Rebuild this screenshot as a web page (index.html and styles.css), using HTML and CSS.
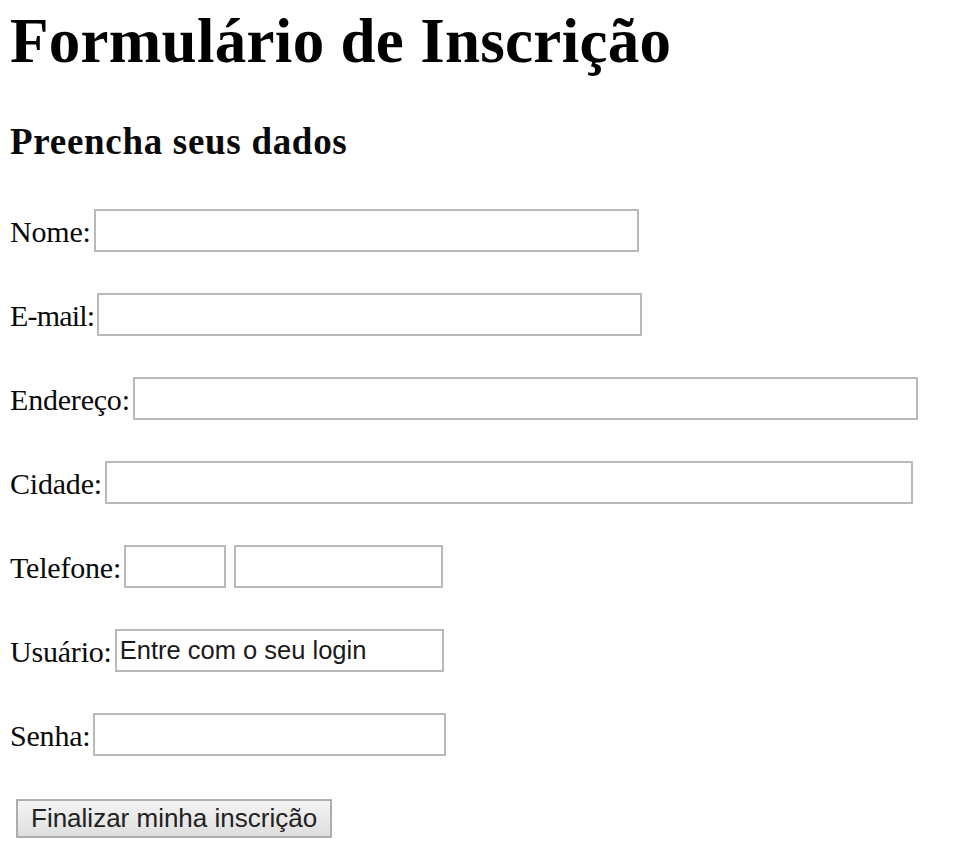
FILE: index.html
```html
<!DOCTYPE html>
<html lang="pt-BR">
<head>
<meta charset="utf-8">
<title>Formulário de Inscrição</title>
<link rel="stylesheet" href="styles.css">
</head>
<body>
<main class="page">
  <h1 class="title">Formulário de Inscrição</h1>
  <h3 class="subtitle">Preencha seus dados</h3>
  <form class="form">
    <div class="row"><label class="lbl" for="nome">Nome:</label><input class="field w-nome" id="nome" type="text"></div>
    <div class="row"><label class="lbl tight" for="email">E-mail:</label><input class="field w-email" id="email" type="text"></div>
    <div class="row"><label class="lbl" for="end">Endereço:</label><input class="field w-end" id="end" type="text"></div>
    <div class="row"><label class="lbl" for="cid">Cidade:</label><input class="field w-cid" id="cid" type="text"></div>
    <div class="row"><label class="lbl" for="ddd">Telefone:</label><input class="field w-ddd" id="ddd" type="text"><input class="field w-tel" type="text"></div>
    <div class="row"><label class="lbl" for="usr">Usuário:</label><input class="field w-usr" id="usr" type="text" value="Entre com o seu login"></div>
    <div class="row"><label class="lbl" for="pwd">Senha:</label><input class="field w-pwd" id="pwd" type="password"></div>
    <div class="actions"><button class="btn" type="submit">Finalizar minha inscrição</button></div>
  </form>
</main>
</body>
</html>
```

FILE: styles.css
```css
html, body {
  margin: 0;
  padding: 0;
  background: #ffffff;
}

.page {
  padding: 0 0 0 10px;
  font-family: "Liberation Serif", "Times New Roman", serif;
  color: #000;
}

.title {
  margin: 10px 0 0 0;
  font-size: 63px;
  line-height: 1;
  font-weight: bold;
  letter-spacing: 0.3px;
  white-space: nowrap;
}

.subtitle {
  margin: 50px 0 0 0;
  font-size: 37px;
  line-height: 1;
  font-weight: bold;
  letter-spacing: 0.7px;
  color: #0a0a0a;
}

.form {
  display: flex;
  flex-direction: column;
  gap: 41px;
  margin-top: 49px;
}

.row {
  display: flex;
  align-items: center;
  height: 43px;
}

.lbl {
  font-size: 30px;
  padding-top: 3px;
  color: #0a0a0a;
  letter-spacing: -0.2px;
  white-space: nowrap;
}

.lbl.tight {
  letter-spacing: -0.8px;
}

.field {
  box-sizing: border-box;
  height: 43px;
  margin: 0 0 0 3px;
  border: 2px solid #b9b9b9;
  padding: 0 3px;
  font-family: "Liberation Sans", Arial, sans-serif;
  font-size: 25.5px;
  color: #1a1a1a;
  background: #fff;
  outline: none;
}

.w-nome { width: 545px; }
.w-email { width: 545px; }
.w-end { width: 785px; }
.w-cid { width: 808px; }
.w-ddd { width: 102px; }
.w-tel { width: 209px; margin-left: 8px; }
.w-usr { width: 329px; }
.w-pwd { width: 353px; }

.actions {
  display: flex;
  margin-top: 2px;
}

.btn {
  box-sizing: border-box;
  height: 39px;
  margin-left: 6px;
  padding: 0 13px;
  border: 2px solid #adadad;
  border-radius: 1px;
  background: linear-gradient(#f4f4f4, #dedede);
  font-family: "Liberation Sans", Arial, sans-serif;
  font-size: 26px;
  color: #222;
}
```
